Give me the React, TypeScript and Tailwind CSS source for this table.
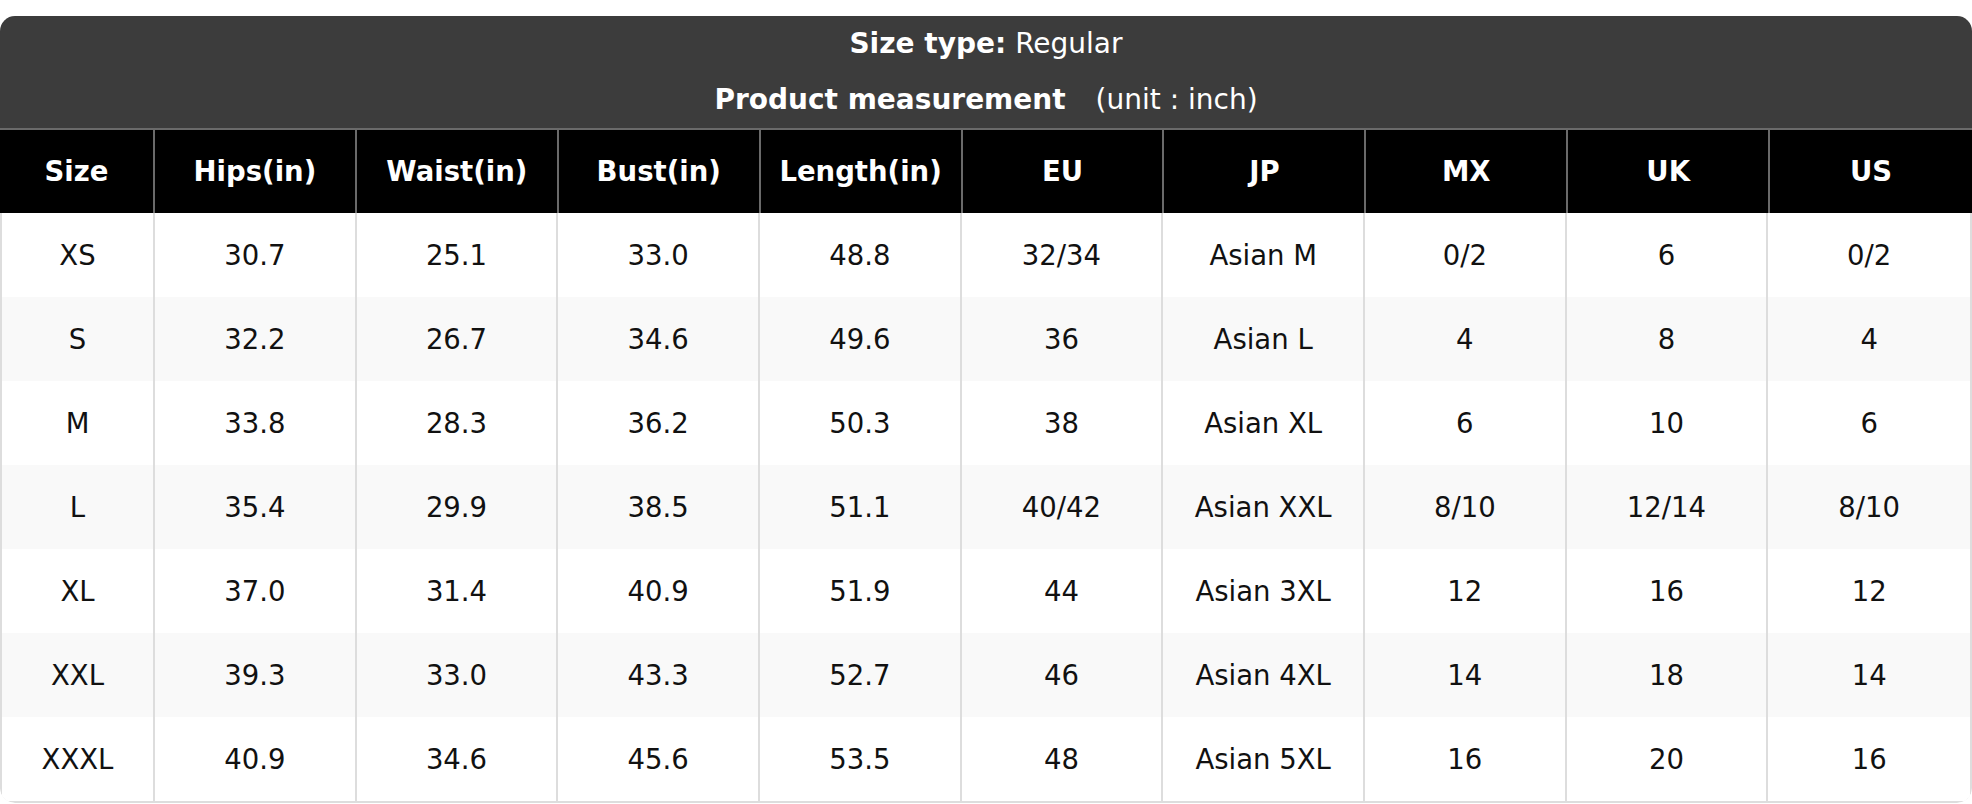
const columns = ["Size", "Hips(in)", "Waist(in)", "Bust(in)", "Length(in)", "EU", "JP", "MX", "UK", "US"];

const rows = [
  ["XS", "30.7", "25.1", "33.0", "48.8", "32/34", "Asian M", "0/2", "6", "0/2"],
  ["S", "32.2", "26.7", "34.6", "49.6", "36", "Asian L", "4", "8", "4"],
  ["M", "33.8", "28.3", "36.2", "50.3", "38", "Asian XL", "6", "10", "6"],
  ["L", "35.4", "29.9", "38.5", "51.1", "40/42", "Asian XXL", "8/10", "12/14", "8/10"],
  ["XL", "37.0", "31.4", "40.9", "51.9", "44", "Asian 3XL", "12", "16", "12"],
  ["XXL", "39.3", "33.0", "43.3", "52.7", "46", "Asian 4XL", "14", "18", "14"],
  ["XXXL", "40.9", "34.6", "45.6", "53.5", "48", "Asian 5XL", "16", "20", "16"],
];

export default function App() {
  return (
    <div className="min-h-screen bg-white pt-[16px] font-['DejaVu_Sans',sans-serif]">
      <section className="overflow-hidden rounded-[15px]">
        <div className="border-b-2 border-[#6a6a6a] bg-[#3c3c3c] text-[28px] text-white">
          <div className="flex h-[56px] items-center justify-center">
            <span className="font-bold">Size type:</span>
            <span className="ml-[9px]">Regular</span>
          </div>
          <div className="flex h-[56px] items-center justify-center">
            <span className="font-bold">Product measurement</span>
            <span className="ml-[30px]">(unit : inch)</span>
          </div>
        </div>
        <div className="grid h-[83px] grid-cols-[155px_repeat(9,1fr)] bg-black text-[27.5px] font-bold text-white">
          {columns.map((c, i) => (
            <div
              key={c}
              className={`flex items-center justify-center ${i < columns.length - 1 ? "border-r-2 border-[#6a6a6a]" : ""}`}
            >
              {c}
            </div>
          ))}
        </div>
        <div className="rounded-b-[15px] border-x-2 border-b-2 border-[#dddddd]">
          {rows.map((r, ri) => (
            <div
              key={r[0]}
              className={`grid h-[84px] grid-cols-[153px_repeat(9,1fr)] pt-[2px] text-[27.5px] text-[#111] ${ri % 2 === 1 ? "bg-[#f9f9f9]" : "bg-white"}`}
            >
              {r.map((v, i) => (
                <div
                  key={i}
                  className={`-mt-[2px] flex items-center justify-center pt-[2px] ${i < r.length - 1 ? "border-r-2 border-[#dddddd]" : ""}`}
                >
                  {v}
                </div>
              ))}
            </div>
          ))}
        </div>
      </section>
    </div>
  );
}
